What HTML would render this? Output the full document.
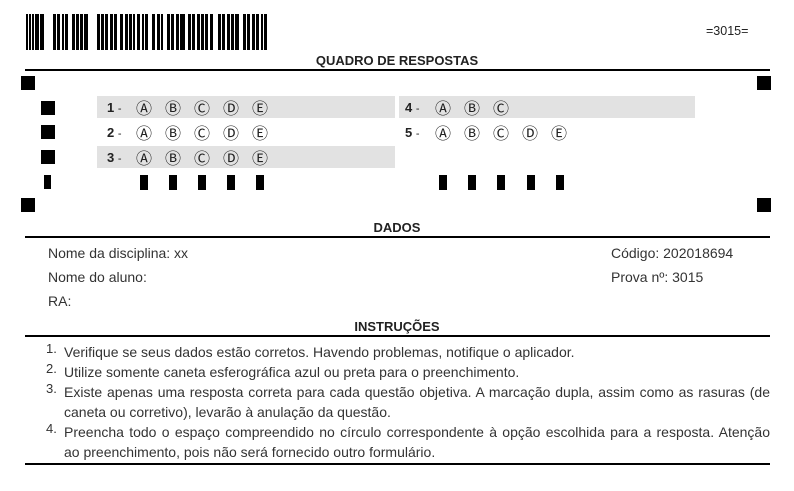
<!DOCTYPE html><html><head><meta charset="utf-8"><style>
body{margin:0;width:794px;height:491px;background:#fff;position:relative;font-family:"Liberation Sans",Arial,sans-serif;color:#222;overflow:hidden}
.a{position:absolute}
.k{position:absolute;background:#000}
.ln{position:absolute;height:1.5px;background:#000;left:25px;width:745px}
.h{position:absolute;font-weight:bold;font-size:13px;width:794px;text-align:center;left:0}
.g{position:absolute;background:#e2e2e2;height:22px}
.n{position:absolute;font-weight:bold;font-size:13px}
.c{position:absolute;font-family:"DejaVu Sans",sans-serif;font-size:16px;width:20px;text-align:center;line-height:18px}
.t{position:absolute;font-size:14px;color:#333}
.li{position:absolute;font-size:14px;color:#333;left:64px;width:706px;line-height:20px;text-align:justify}
.num{position:absolute;font-size:13px;color:#333;left:46px}
</style></head><body>
<svg class="a" style="left:26px;top:14px" width="242" height="36">
<g fill="#000">
<rect x="0" y="0" width="18" height="36"/>
<rect x="27" y="0" width="15" height="36"/>
<rect x="46" y="0" width="16" height="36"/>
<rect x="71" y="0" width="20" height="36"/>
<rect x="94" y="0" width="15" height="36"/>
<rect x="111" y="0" width="11" height="36"/>
<rect x="126" y="0" width="11" height="36"/>
<rect x="141" y="0" width="18" height="36"/>
<rect x="162" y="0" width="25" height="36"/>
<rect x="192" y="0" width="21" height="36"/>
<rect x="217" y="0" width="24" height="36"/>
</g>
<g fill="#fff">
<rect x="2" y="0" width="1" height="36"/><rect x="5" y="0" width="1" height="36"/><rect x="8" y="0" width="1" height="36"/><rect x="13" y="0" width="1" height="36"/>
<rect x="30" y="0" width="1" height="36"/><rect x="34" y="0" width="2" height="36"/><rect x="38" y="0" width="1" height="36"/>
<rect x="49" y="0" width="1" height="36"/><rect x="53" y="0" width="1" height="36"/><rect x="57" y="0" width="1" height="36"/>
<rect x="74" y="0" width="1" height="36"/><rect x="78" y="0" width="1" height="36"/><rect x="82" y="0" width="2" height="36"/><rect x="87" y="0" width="1" height="36"/>
<rect x="97" y="0" width="2" height="36"/><rect x="102" y="0" width="1" height="36"/><rect x="106" y="0" width="1" height="36"/>
<rect x="114" y="0" width="2" height="36"/><rect x="118" y="0" width="1" height="36"/>
<rect x="129" y="0" width="2" height="36"/><rect x="134" y="0" width="1" height="36"/>
<rect x="144" y="0" width="1" height="36"/><rect x="148" y="0" width="2" height="36"/><rect x="153" y="0" width="1" height="36"/>
<rect x="165" y="0" width="1" height="36"/><rect x="169" y="0" width="2" height="36"/><rect x="174" y="0" width="1" height="36"/><rect x="178" y="0" width="1" height="36"/><rect x="182" y="0" width="2" height="36"/>
<rect x="195" y="0" width="1" height="36"/><rect x="199" y="0" width="2" height="36"/><rect x="204" y="0" width="1" height="36"/><rect x="208" y="0" width="1" height="36"/>
<rect x="220" y="0" width="1" height="36"/><rect x="224" y="0" width="2" height="36"/><rect x="229" y="0" width="1" height="36"/><rect x="233" y="0" width="2" height="36"/><rect x="237" y="0" width="1" height="36"/>
</g></svg>
<div class="a" style="left:706px;top:24px;font-size:12.5px">=3015=</div>
<div class="h" style="top:53px">QUADRO DE RESPOSTAS</div>
<div class="ln" style="top:69px"></div>
<div class="k" style="left:21px;top:76px;width:14px;height:14px"></div>
<div class="k" style="left:757px;top:76px;width:14px;height:14px"></div>
<div class="k" style="left:21px;top:198px;width:14px;height:14px"></div>
<div class="k" style="left:757px;top:198px;width:14px;height:14px"></div>
<div class="k" style="left:41px;top:101px;width:14px;height:14px"></div>
<div class="k" style="left:41px;top:125px;width:14px;height:14px"></div>
<div class="k" style="left:41px;top:150px;width:14px;height:14px"></div>
<div class="k" style="left:44px;top:175px;width:7px;height:14px"></div>
<div class="k" style="left:140px;top:175px;width:8px;height:15px"></div>
<div class="k" style="left:169px;top:175px;width:8px;height:15px"></div>
<div class="k" style="left:198px;top:175px;width:8px;height:15px"></div>
<div class="k" style="left:227px;top:175px;width:8px;height:15px"></div>
<div class="k" style="left:256px;top:175px;width:8px;height:15px"></div>
<div class="k" style="left:439px;top:175px;width:8px;height:15px"></div>
<div class="k" style="left:468px;top:175px;width:8px;height:15px"></div>
<div class="k" style="left:497px;top:175px;width:8px;height:15px"></div>
<div class="k" style="left:527px;top:175px;width:8px;height:15px"></div>
<div class="k" style="left:556px;top:175px;width:8px;height:15px"></div>
<div class="g" style="left:97px;top:96px;width:298px"></div>
<div class="g" style="left:97px;top:146px;width:298px"></div>
<div class="g" style="left:399px;top:96px;width:296px"></div>
<div class="n" style="left:107px;top:100px">1 <span style="font-weight:normal;font-size:11px">-</span></div>
<div class="n" style="left:107px;top:125px">2 <span style="font-weight:normal;font-size:11px">-</span></div>
<div class="n" style="left:107px;top:150px">3 <span style="font-weight:normal;font-size:11px">-</span></div>
<div class="n" style="left:405px;top:100px">4 <span style="font-weight:normal;font-size:11px">-</span></div>
<div class="n" style="left:405px;top:125px">5 <span style="font-weight:normal;font-size:11px">-</span></div>
<div class="c" style="left:134px;top:100px">Ⓐ</div><div class="c" style="left:163px;top:100px">Ⓑ</div><div class="c" style="left:192px;top:100px">Ⓒ</div><div class="c" style="left:221px;top:100px">Ⓓ</div><div class="c" style="left:250px;top:100px">Ⓔ</div>
<div class="c" style="left:134px;top:125px">Ⓐ</div><div class="c" style="left:163px;top:125px">Ⓑ</div><div class="c" style="left:192px;top:125px">Ⓒ</div><div class="c" style="left:221px;top:125px">Ⓓ</div><div class="c" style="left:250px;top:125px">Ⓔ</div>
<div class="c" style="left:134px;top:150px">Ⓐ</div><div class="c" style="left:163px;top:150px">Ⓑ</div><div class="c" style="left:192px;top:150px">Ⓒ</div><div class="c" style="left:221px;top:150px">Ⓓ</div><div class="c" style="left:250px;top:150px">Ⓔ</div>
<div class="c" style="left:433px;top:100px">Ⓐ</div><div class="c" style="left:462px;top:100px">Ⓑ</div><div class="c" style="left:491px;top:100px">Ⓒ</div>
<div class="c" style="left:433px;top:125px">Ⓐ</div><div class="c" style="left:462px;top:125px">Ⓑ</div><div class="c" style="left:491px;top:125px">Ⓒ</div><div class="c" style="left:520px;top:125px">Ⓓ</div><div class="c" style="left:549px;top:125px">Ⓔ</div>
<div class="h" style="top:220px">DADOS</div>
<div class="ln" style="top:236px"></div>
<div class="t" style="left:48px;top:245px">Nome da disciplina: xx</div>
<div class="t" style="left:48px;top:269px">Nome do aluno:</div>
<div class="t" style="left:48px;top:293px">RA:</div>
<div class="t" style="left:611px;top:245px">Código: 202018694</div>
<div class="t" style="left:611px;top:269px">Prova nº: 3015</div>
<div class="h" style="top:319px">INSTRUÇÕES</div>
<div class="ln" style="top:335px"></div>
<div class="num" style="top:341px">1.</div>
<div class="li" style="top:342px">Verifique se seus dados estão corretos. Havendo problemas, notifique o aplicador.</div>
<div class="num" style="top:361px">2.</div>
<div class="li" style="top:362px">Utilize somente caneta esferográfica azul ou preta para o preenchimento.</div>
<div class="num" style="top:381px">3.</div>
<div class="li" style="top:382px">Existe apenas uma resposta correta para cada questão objetiva. A marcação dupla, assim como as rasuras (de caneta ou corretivo), levarão à anulação da questão.</div>
<div class="num" style="top:421px">4.</div>
<div class="li" style="top:422px;text-align-last:justify">Preencha todo o espaço compreendido no círculo correspondente à opção escolhida para a resposta. Atenção</div>
<div class="li" style="top:442px">ao preenchimento, pois não será fornecido outro formulário.</div>
<div class="ln" style="top:463px"></div>
</body></html>
